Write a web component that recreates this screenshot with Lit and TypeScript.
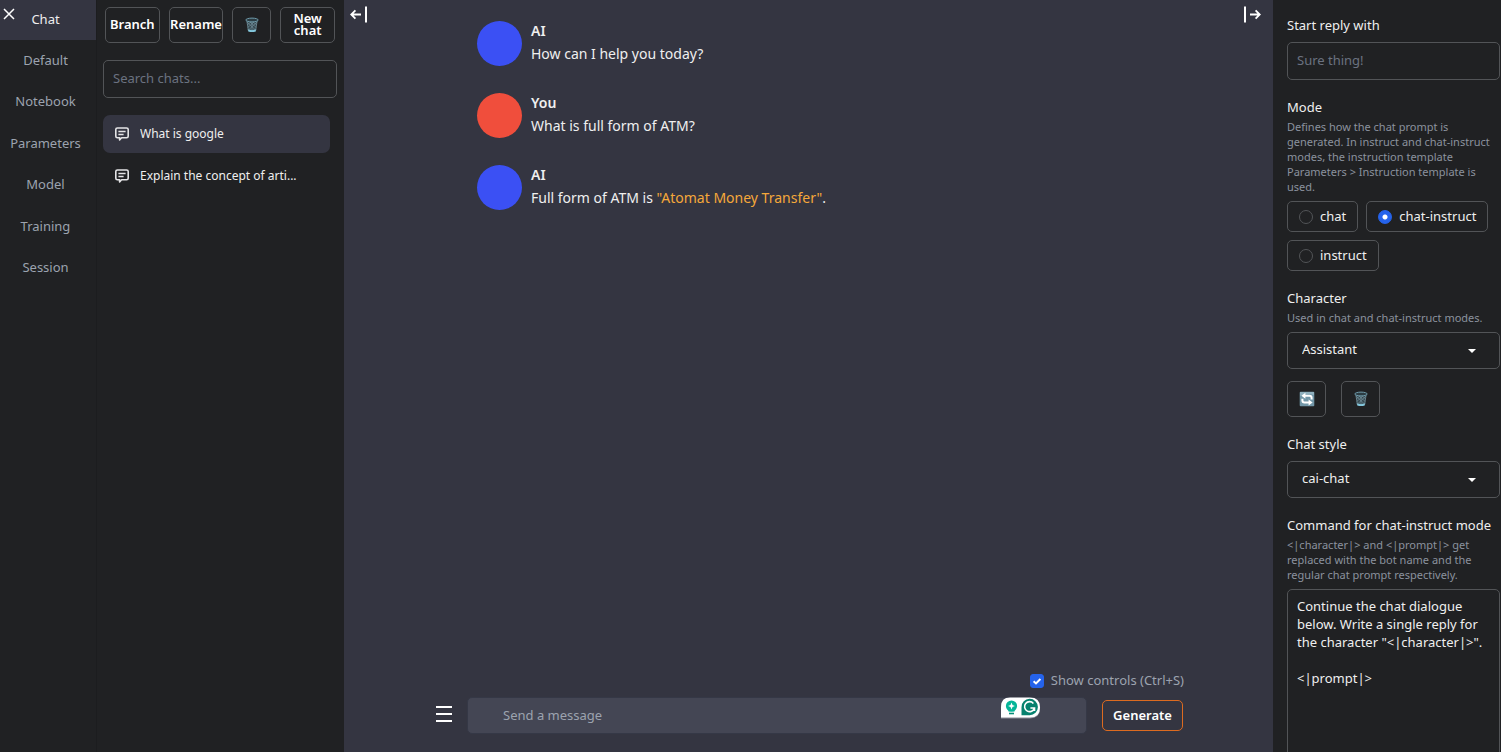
import { LitElement, html, css, svg } from "lit";
import { customElement, state } from "lit/decorators.js";
import { classMap } from "lit/directives/class-map.js";

const trashIcon = html`<svg class="emoji" viewBox="0 0 16 16" aria-hidden="true">
  <path d="M2.3 3 L4 14.2 Q8 16 12 14.2 L13.7 3 Z" fill="#35474f" />
  <path d="M3.8 12.2 Q8 13.6 12.2 12.2 L11.9 14.2 Q8 16 4.1 14.2 Z" fill="#82c6dc" />
  <path d="M3 5 L11.5 13 M5.5 4.5 L12.3 10.5 M8.5 4.5 L12.8 8 M13 5 L4.5 13 M10.5 4.5 L3.7 10.5 M7.5 4.5 L3.2 8 M2.9 4 L4.4 13.5 M13.1 4 L11.6 13.5 M8 5 V13.5" stroke="#7b98a4" stroke-width="0.6" fill="none" />
  <ellipse cx="8" cy="3" rx="6.2" ry="1.9" fill="#2c3c43" stroke="#6f9bab" stroke-width="1" />
</svg>`;

const refreshIcon = html`<svg class="emoji" viewBox="0 0 16 16" aria-hidden="true">
  <rect x="0.7" y="0.7" width="14.6" height="14.6" rx="1" fill="#7297a8" />
  <path d="M1 1 H15 V4 Q8 1.5 1 5 Z" fill="#8fb0be" />
  <path d="M5.8 4.8 H10.5 Q12.6 4.8 12.6 7 V8.6 M10.2 11.4 H5.5 Q3.4 11.4 3.4 9.4 V7.8" stroke="#fff" stroke-width="2" fill="none" />
  <path d="M6.4 1.8 V7.8 L2.4 4.8 Z M9.6 8.4 V14.4 L13.6 11.4 Z" fill="#fff" />
</svg>`;

const chatIcon = html`<svg class="chat-icon" viewBox="0 0 14 14" aria-hidden="true">
  <path d="M2.4 1 H11.6 Q13.2 1 13.2 2.6 V9.2 Q13.2 10.8 11.6 10.8 H6.6 L4.6 12.9 V10.8 H2.4 Q0.8 10.8 0.8 9.2 V2.6 Q0.8 1 2.4 1 Z" fill="none" stroke="#e4e4e6" stroke-width="1.6" stroke-linejoin="round" />
  <path d="M3.4 4.5 H10.6 M3.4 7.5 H8.6" stroke="#e4e4e6" stroke-width="1.3" />
</svg>`;

const arrowShape = svg`
  <path d="M1 8.5 H11 M5.4 4.3 L1.2 8.5 L5.4 12.7" fill="none" stroke="#fff" stroke-width="1.8" />
  <path d="M16 0.5 V16.5" stroke="#fff" stroke-width="2" />`;

@customElement("app-root")
export class AppRoot extends LitElement {
  @state() private tab = "Chat";
  @state() private mode = "chat-instruct";
  @state() private showControls = true;

  private tabs = ["Chat", "Default", "Notebook", "Parameters", "Model", "Training", "Session"];
  private chats = ["What is google", "Explain the concept of arti..."];
  private modes = ["chat", "chat-instruct", "instruct"];

  static styles = css`
    :host {
      display: grid;
      grid-template-columns: 96px 248px minmax(0, 1fr) 228px;
      height: 100vh;
      overflow: hidden;
      background: #343541;
      color: #efefef;
      font: 13px/19px "Noto Sans", sans-serif;
    }
    * { box-sizing: border-box; }
    button, input, select, textarea {
      font: inherit;
      color: inherit;
      margin: 0;
      background: none;
      border: 1px solid #525457;
      border-radius: 5px;
    }
    button { cursor: pointer; padding: 0; }
    ::placeholder { color: #6b7280; opacity: 1; }

    .tabs { position: relative; background: #202123; }
    .tab-list {
      display: grid;
      grid-auto-rows: 1fr;
      min-height: 290px;
    }
    .tab {
      height: 40px;
      padding: 0 5px 2px 0;
      border: 0;
      border-radius: 0;
      color: #9ca3af;
    }
    .tab.selected { background: #343541; color: #efefef; }
    .close {
      position: absolute;
      left: 3px;
      top: 8px;
      width: 12px;
      height: 12px;
      border: 0;
    }
    .close svg, .toggle svg, .menu svg { display: block; width: 100%; height: 100%; }

    .history {
      background: #202123;
      border-left: 1px solid #1c1d1f;
      padding: 7px 7px 0 6px;
      min-width: 0;
    }
    .actions {
      display: flex;
      gap: 9px;
      padding: 0 2px;
      margin-bottom: 17px;
    }
    .action {
      flex: 1 1 0;
      height: 36px;
      padding-bottom: 2px;
      font-weight: 600;
      line-height: 12px;
      color: #fff;
    }
    .icon-button {
      flex: 0 0 39px;
      height: 36px;
      display: grid;
      place-items: center;
    }
    .emoji { width: 16px; height: 16px; display: block; }
    .text-input { display: block; width: 100%; height: 38px; padding: 0 9px 2px; }
    .chat-list {
      list-style: none;
      margin: 17px 7px 0 0;
      padding: 0;
      display: grid;
      gap: 4px;
    }
    .chat {
      display: flex;
      align-items: center;
      gap: 11px;
      width: 100%;
      height: 38px;
      padding: 0 12px;
      border: 0;
      border-radius: 7px;
      font-size: 12px;
      text-align: left;
    }
    .chat.selected { background: #343541; }
    .chat-icon { flex: none; width: 14px; height: 14px; }
    .chat-title {
      min-width: 0;
      padding-bottom: 2px;
      overflow: hidden;
      white-space: nowrap;
      text-overflow: ellipsis;
    }

    .main {
      position: relative;
      display: flex;
      flex-direction: column;
      min-width: 0;
    }
    .toggle {
      position: absolute;
      top: 6px;
      width: 18px;
      height: 17px;
      border: 0;
    }
    .toggle.left { left: 6px; }
    .toggle.right { right: 12px; }
    .toggle.right svg { transform: scaleX(-1); }
    .messages {
      flex: 1;
      width: 100%;
      max-width: 663px;
      margin: 0 auto;
      padding-top: 21px;
      display: flex;
      flex-direction: column;
      gap: 27px;
      font-size: 14px;
      line-height: 23px;
    }
    .message { display: flex; align-items: flex-start; gap: 9px; }
    .avatar { flex: none; width: 45px; height: 45px; border-radius: 50%; background: #3b50f4; }
    .avatar.you { background: #f04e3c; }
    .message-text { margin-top: -2px; }
    .name { font-weight: 600; }
    .message p { margin: 0; }
    .quote { color: #f5a83a; }

    .footer {
      width: 100%;
      max-width: 751px;
      margin: 0 auto;
      padding-bottom: 18px;
    }
    .show-controls {
      display: flex;
      justify-content: flex-end;
      align-items: center;
      gap: 7px;
      margin-bottom: 7px;
      color: #9ca3af;
    }
    .show-controls input {
      appearance: none;
      width: 14px;
      height: 14px;
      border-radius: 3px;
    }
    .show-controls input:checked {
      border-color: #2563eb;
      background: #2563eb
        url("data:image/svg+xml,%3Csvg xmlns='http://www.w3.org/2000/svg' viewBox='0 0 12 12'%3E%3Cpath d='M2.6 6.2 5 8.4 9.4 4' fill='none' stroke='white' stroke-width='2'/%3E%3C/svg%3E")
        center / 12px 12px no-repeat;
    }
    .composer { display: flex; align-items: center; }
    .menu { width: 22px; height: 22px; border: 0; margin-right: 12px; }
    .field { position: relative; flex: 1; }
    .field input {
      display: block;
      width: 100%;
      height: 37px;
      padding: 0 35px 2px;
      background: #444654;
      border-color: #353846;
    }
    .field ::placeholder { color: #9ca3af; }
    .badge { position: absolute; right: 46px; top: 0; width: 41px; height: 22px; display: block; }
    .generate {
      width: 81px;
      height: 31px;
      margin: 0 1px 0 15px;
      border-color: #dd6b20;
      font-weight: 600;
      color: #fff;
    }

    .controls {
      background: #202123;
      padding: 16px 1px 0 14px;
      overflow: hidden;
      min-height: 0;
    }
    .group { margin: 0 0 18px; padding: 0; border: 0; min-width: 0; }
    .group label.title, .group legend { display: block; padding: 0; line-height: 19px; }
    .info {
      margin: 2px 0 0;
      font-size: 11px;
      line-height: 15px;
      color: #8b929e;
    }
    .body { margin-top: 7px; }
    .options { display: flex; flex-wrap: wrap; gap: 8px; }
    .option {
      display: flex;
      align-items: center;
      gap: 7px;
      height: 31px;
      padding: 0 11px;
      border: 1px solid #525457;
      border-radius: 5px;
    }
    .option input {
      appearance: none;
      width: 14px;
      height: 14px;
      border-radius: 50%;
    }
    .option input:checked {
      border-color: #2563eb;
      background: radial-gradient(circle, #fff 0 2px, #2563eb 3px);
    }
    .select { position: relative; }
    .select select {
      appearance: none;
      display: block;
      width: 100%;
      height: 37px;
      padding: 0 40px 2px 14px;
    }
    .caret {
      position: absolute;
      right: 24px;
      top: 17px;
      width: 8px;
      height: 4px;
      pointer-events: none;
    }
    .pair { display: flex; gap: 15px; margin-top: 12px; }
    textarea {
      display: block;
      width: 100%;
      height: 220px;
      padding: 7px 9px;
      line-height: 18px;
      resize: none;
      overflow: hidden;
    }
  `;

  private message(name: string, text: unknown) {
    return html`<article class="message">
      <div class=${classMap({ avatar: true, you: name === "You" })}></div>
      <div class="message-text">
        <div class="name">${name}</div>
        <p>${text}</p>
      </div>
    </article>`;
  }

  private select(id: string, value: string) {
    return html`<div class="select body">
      <select id=${id}><option>${value}</option></select>
      <svg class="caret" viewBox="0 0 8 4" aria-hidden="true"><path d="M0 0 H8 L4 4 Z" fill="#fff" /></svg>
    </div>`;
  }

  render() {
    return html`
      <nav class="tabs" aria-label="Sections">
        <div class="tab-list">
          ${this.tabs.map((t) => html`<button
            class=${classMap({ tab: true, selected: t === this.tab })}
            @click=${() => (this.tab = t)}>${t}</button>`)}
        </div>
        <button class="close" aria-label="Close navigation">
          <svg viewBox="0 0 12 12"><path d="M1 1 L11 11 M11 1 L1 11" stroke="#fff" stroke-width="1.5" /></svg>
        </button>
      </nav>

      <section class="history" aria-label="Past chats">
        <div class="actions">
          <button class="action">Branch</button>
          <button class="action">Rename</button>
          <button class="icon-button" aria-label="Delete chat">${trashIcon}</button>
          <button class="action">New chat</button>
        </div>
        <input class="text-input" type="search" aria-label="Search chats" placeholder="Search chats..." />
        <ul class="chat-list">
          ${this.chats.map((c, i) => html`<li><button class=${classMap({ chat: true, selected: i === 0 })}>
            ${chatIcon}<span class="chat-title">${c}</span>
          </button></li>`)}
        </ul>
      </section>

      <main class="main">
        <div class="messages">
          ${this.message("AI", "How can I help you today?")}
          ${this.message("You", "What is full form of ATM?")}
          ${this.message("AI", html`Full form of ATM is <span class="quote">"Atomat Money Transfer"</span>.`)}
        </div>
        <div class="footer">
          <div class="show-controls">
            <input id="show" type="checkbox" .checked=${this.showControls}
              @change=${() => (this.showControls = !this.showControls)} />
            <label for="show">Show controls (Ctrl+S)</label>
          </div>
          <div class="composer">
            <button class="menu" aria-label="Menu">
              <svg viewBox="0 0 22 22"><path d="M3 2 H19 M3 9 H19 M3 16 H19" stroke="#fff" stroke-width="2" /></svg>
            </button>
            <div class="field">
              <input type="text" aria-label="Message" placeholder="Send a message" />
              <svg class="badge" viewBox="0 0 41 22" aria-hidden="true">
                <path d="M1 21.4 V10.5 Q1 1.2 10 1.2 H30 Q40 1.2 40 11 Q40 21.4 30 21.4 Z" fill="#8b8d98" />
                <path d="M1 20.4 V10 Q1 0.6 10 0.6 H30 Q40 0.6 40 10.4 Q40 20.4 30 20.4 Z" fill="#fff" />
                <circle cx="11.5" cy="9" r="5.6" fill="#06b598" />
                <path d="M8.4 12 H14.6 V14.5 H8.4 Z" fill="#06b598" />
                <path d="M9 16.5 H14" stroke="#078c77" stroke-width="1.6" />
                <path d="M11.5 5.6 L12.5 8 L14.9 9 L12.5 10 L11.5 12.4 L10.5 10 L8.1 9 L10.5 8 Z" fill="#fff" />
                <path d="M21.5 18.2 V10.2 A8.2 8.2 0 1 1 29.7 18.2 Z" fill="#07816e" />
                <path d="M33.4 6.4 A5 5 0 1 0 34.4 11 H30.4 M34.5 10.6 V14" fill="none" stroke="#fff" stroke-width="1.6" />
              </svg>
            </div>
            <button class="generate">Generate</button>
          </div>
        </div>
        <button class="toggle left" aria-label="Hide chat list"><svg viewBox="0 0 18 17">${arrowShape}</svg></button>
        <button class="toggle right" aria-label="Hide controls"><svg viewBox="0 0 18 17">${arrowShape}</svg></button>
      </main>

      <aside class="controls" aria-label="Chat controls">
        <div class="group">
          <label class="title" for="start">Start reply with</label>
          <input id="start" class="text-input body" type="text" placeholder="Sure thing!" />
        </div>
        <fieldset class="group">
          <legend>Mode</legend>
          <p class="info">Defines how the chat prompt is generated. In instruct and chat-instruct modes, the instruction template Parameters &gt; Instruction template is used.</p>
          <div class="options body">
            ${this.modes.map((m) => html`<label class="option">
              <input type="radio" name="mode" .checked=${m === this.mode} @change=${() => (this.mode = m)} />${m}
            </label>`)}
          </div>
        </fieldset>
        <div class="group">
          <label class="title" for="character">Character</label>
          <p class="info">Used in chat and chat-instruct modes.</p>
          ${this.select("character", "Assistant")}
          <div class="pair">
            <button class="icon-button" aria-label="Refresh characters">${refreshIcon}</button>
            <button class="icon-button" aria-label="Delete character">${trashIcon}</button>
          </div>
        </div>
        <div class="group">
          <label class="title" for="style">Chat style</label>
          ${this.select("style", "cai-chat")}
        </div>
        <div class="group">
          <label class="title" for="command">Command for chat-instruct mode</label>
          <p class="info">&lt;|character|&gt; and &lt;|prompt|&gt; get replaced with the bot name and the regular chat prompt respectively.</p>
          <textarea id="command" class="body" .value=${'Continue the chat dialogue below. Write a single reply for the character "<|character|>".\n\n<|prompt|>'}></textarea>
        </div>
      </aside>
    `;
  }
}
